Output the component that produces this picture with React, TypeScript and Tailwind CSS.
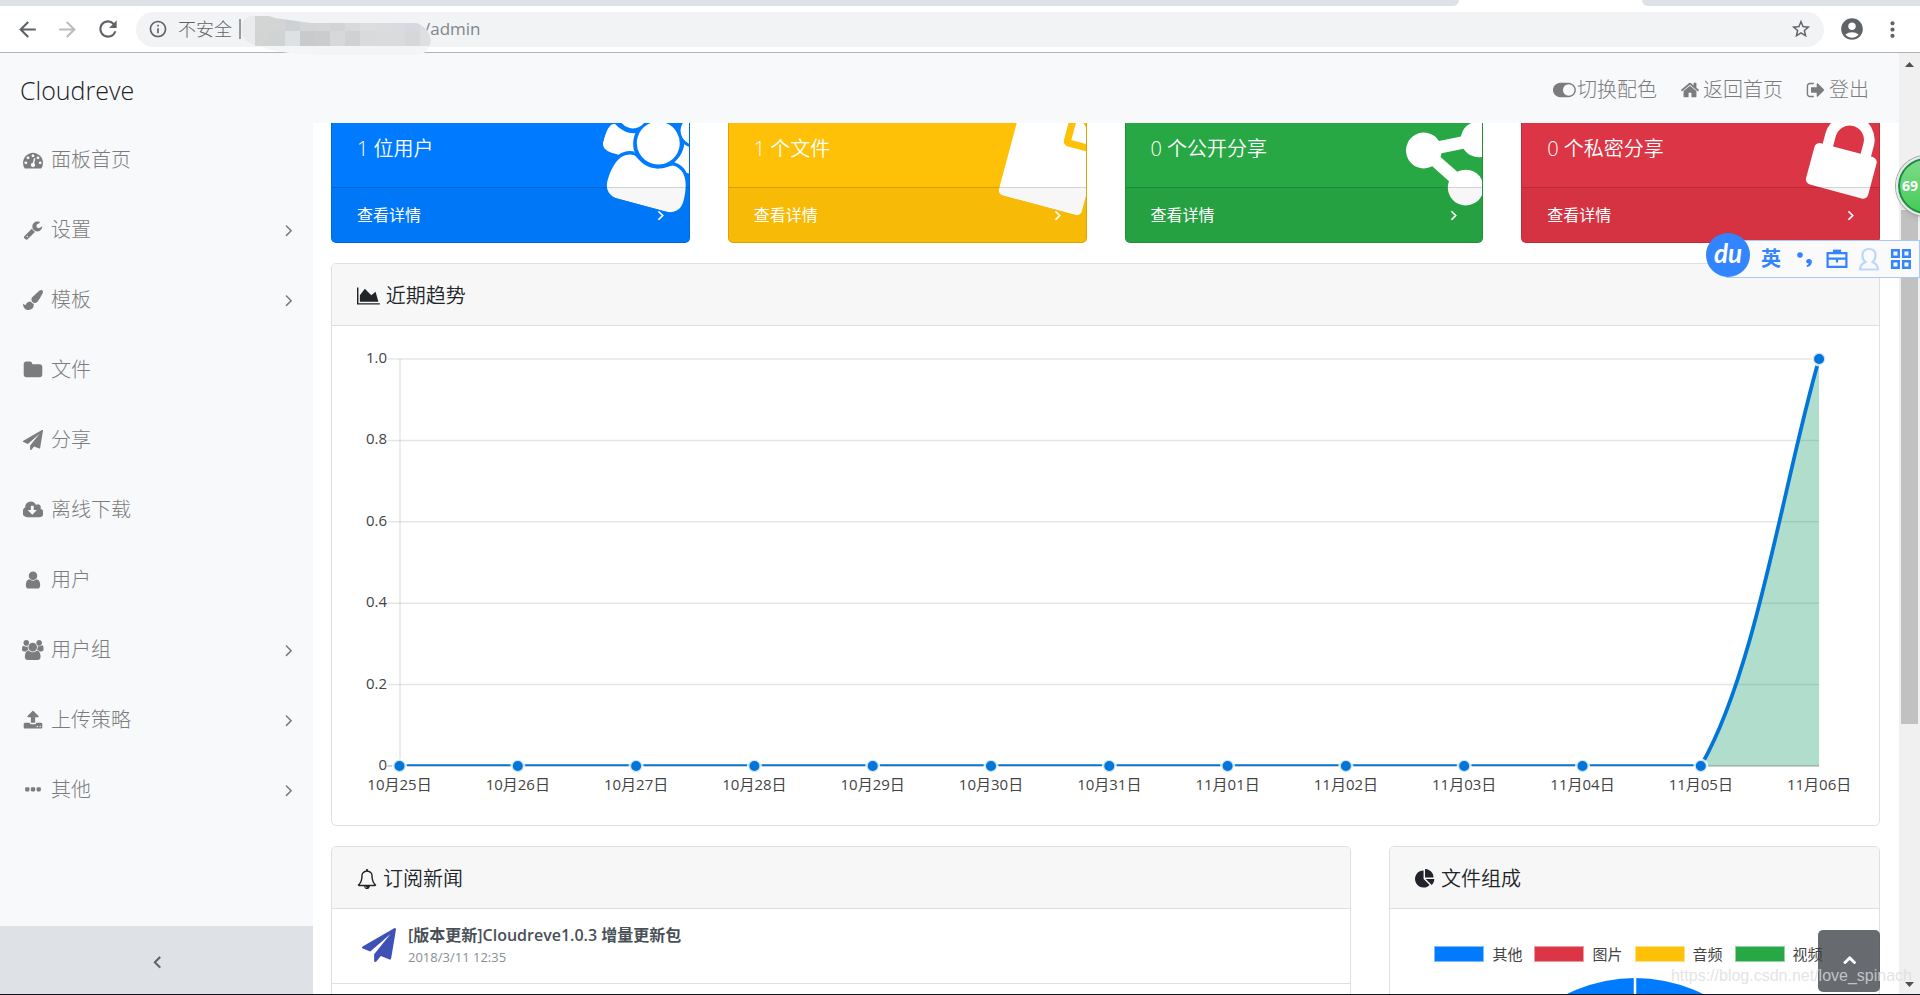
import type { ReactNode } from 'react';
import {
  MdAccountCircle,
  MdArrowBack,
  MdArrowForward,
  MdInfoOutline,
  MdMoreVert,
  MdRefresh,
  MdStarBorder,
} from 'react-icons/md';

// Font Awesome 4 glyphs on the 1792-unit em grid: [width, path]
const GLYPHS = {
  tachometer: [1792, 'M384 1152q0-53-37.5-90.5t-90.5-37.5-90.5 37.5-37.5 90.5 37.5 90.5 90.5 37.5 90.5-37.5 37.5-90.5zm192-448q0-53-37.5-90.5t-90.5-37.5-90.5 37.5-37.5 90.5 37.5 90.5 90.5 37.5 90.5-37.5 37.5-90.5zm428 481l101-382q6-26-7.5-48.5t-38.5-29.5-48 6.5-30 39.5l-101 382q-60 5-107 43.5t-63 98.5q-20 77 20 146t117 89 146-20 89-117q16-60-6-117t-72-91zm660-33q0-53-37.5-90.5t-90.5-37.5-90.5 37.5-37.5 90.5 37.5 90.5 90.5 37.5 90.5-37.5 37.5-90.5zm-640-640q0-53-37.5-90.5t-90.5-37.5-90.5 37.5-37.5 90.5 37.5 90.5 90.5 37.5 90.5-37.5 37.5-90.5zm448 192q0-53-37.5-90.5t-90.5-37.5-90.5 37.5-37.5 90.5 37.5 90.5 90.5 37.5 90.5-37.5 37.5-90.5zm320 448q0 261-141 483-19 29-54 29h-1402q-35 0-54-29-141-221-141-483 0-182 71-348t191-286 286-191 348-71 348 71 286 191 191 286 71 348z'],
  wrench: [1792, 'M448 1472q0-26-19-45t-45-19-45 19-19 45 19 45 45 19 45-19 19-45zm644-420l-682 682q-37 37-90 37-52 0-91-37l-106-108q-38-36-38-90 0-53 38-91l681-681q39 98 114.5 173.5t173.5 114.5zm634-435q0 39-23 106-47 134-164.5 217.5t-258.5 83.5q-185 0-316.5-131.5t-131.5-316.5 131.5-316.5 316.5-131.5q58 0 121.5 16.5t107.5 46.5q16 11 16 28t-16 28l-293 169v224l193 107q5-3 79-48.5t135.5-81 70.5-35.5q15 0 23.5 10t8.5 25z'],
  brush: [1792, 'M1615 0q70 0 122.5 46.5t52.5 116.5q0 63-45 151-332 629-465 752-97 91-218 91-126 0-216.5-92.5t-90.5-219.5q0-128 92-212l638-579q59-54 130-54zm-909 1034q39 76 106.5 130t150.5 76l1 71q4 213-129.5 347t-348.5 134q-123 0-218-46.5t-152.5-127.5-86.5-183-29-220q7 5 41 30t62 44.5 59 36.5 46 17q41 0 55-37 25-66 57.5-112.5t69.5-76 88-47.5 103-25.5 125-10.5z'],
  folder: [1792, 'M1728 608v704q0 92-66 158t-158 66h-1216q-92 0-158-66t-66-158v-960q0-92 66-158t158-66h320q92 0 158 66t66 158v32h672q92 0 158 66t66 158z'],
  plane: [1792, 'M1764 11q33 24 27 64l-256 1536q-5 29-32 45-14 8-31 8-11 0-24-5l-453-185-242 295q-18 23-49 23-13 0-22-4-19-7-30.5-23.5t-11.5-36.5v-349l864-1059-1069 925-395-162q-37-14-40-55-2-40 32-59l1664-960q15-9 32-9 20 0 36 11z'],
  cloud: [1856, 'M1216 928q0-14-9-23t-23-9h-224v-352q0-13-9.5-22.5t-22.5-9.5h-192q-13 0-22.5 9.5t-9.5 22.5v352h-224q-13 0-22.5 9.5t-9.5 22.5q0 14 9 23l352 352q9 9 23 9t23-9l351-351q10-12 10-24zm640 224q0 159-112.5 271.5t-271.5 112.5h-1088q-185 0-316.5-131.5t-131.5-316.5q0-130 70-240t188-165q-2-30-2-43 0-212 150-362t362-150q156 0 285.5 87t188.5 231q71-62 166-62 106 0 181 75t75 181q0 76-41 138 130 31 213.5 135.5t83.5 238.5z'],
  user: [1792, 'M1536 1399q0 109-62.5 187t-150.5 78h-854q-88 0-150.5-78t-62.5-187q0-85 8.5-160.5t31.5-152 58.5-131 94-89 134.5-34.5q131 128 313 128t313-128q76 0 134.5 34.5t94 89 58.5 131 31.5 152 8.5 160.5zm-256-887q0 159-112.5 271.5t-271.5 112.5-271.5-112.5-112.5-271.5 112.5-271.5 271.5-112.5 271.5 112.5 112.5 271.5z'],
  users: [1920, 'M593 896q-162 5-265 128h-134q-82 0-138-40.5t-56-118.5q0-353 124-353 6 0 43.5 21t97.5 42.5 119 21.5q67 0 133-23-5 37-5 66 0 159 93 292zm1071 637q0 120-73 189.5t-194 69.5h-874q-121 0-194-69.5t-73-189.5q0-53 3.5-103.5t14-109 26.5-108.5 43-97.5 62-81 85.5-53.5 111.5-20q10 0 43 21.5t73 48 107 48 135 21.5 135-21.5 107-48 73-48 43-21.5q61 0 111.5 20t85.5 53.5 62 81 43 97.5 26.5 108.5 14 109 3.5 103.5zm-1024-1277q0 106-75 181t-181 75-181-75-75-181 75-181 181-75 181 75 75 181zm704 384q0 159-112.5 271.5t-271.5 112.5-271.5-112.5-112.5-271.5 112.5-271.5 271.5-112.5 271.5 112.5 112.5 271.5zm576 225q0 78-56 118.5t-138 40.5h-134q-103-123-265-128 93-133 93-292 0-29-5-66 66 23 133 23 59 0 119-21.5t97.5-42.5 43.5-21q124 0 124 353zm-128-609q0 106-75 181t-181 75-181-75-75-181 75-181 181-75 181 75 75 181z'],
  upload: [1792, 'M1344 1472q0-26-19-45t-45-19-45 19-19 45 19 45 45 19 45-19 19-45zm256 0q0-26-19-45t-45-19-45 19-19 45 19 45 45 19 45-19 19-45zm128-224v320q0 40-28 68t-68 28h-1472q-40 0-68-28t-28-68v-320q0-40 28-68t68-28h427q21 56 70.5 92t110.5 36h256q61 0 110.5-36t70.5-92h427q40 0 68 28t28 68zm-325-648q-17 40-59 40h-256v448q0 26-19 45t-45 19h-256q-26 0-45-19t-19-45v-448h-256q-42 0-59-40-17-39 14-69l448-448q18-19 45-19t45 19l448 448q31 30 14 69z'],
  ellipsis: [1792, 'M576 736v192q0 40-28 68t-68 28h-192q-40 0-68-28t-28-68v-192q0-40 28-68t68-28h192q40 0 68 28t28 68zm512 0v192q0 40-28 68t-68 28h-192q-40 0-68-28t-28-68v-192q0-40 28-68t68-28h192q40 0 68 28t28 68zm512 0v192q0 40-28 68t-68 28h-192q-40 0-68-28t-28-68v-192q0-40 28-68t68-28h192q40 0 68 28t28 68z'],
  angle: [1792, 'M1171 960q0 13-10 23l-466 466q-10 10-23 10t-23-10l-50-50q-10-10-10-23t10-23l393-393-393-393q-10-10-10-23t10-23l50-50q10-10 23-10t23 10l466 466q10 10 10 23z'],
  toggle: [2048, 'M0 896q0-130 51-248.5t136.5-204 204-136.5 248.5-51h768q130 0 248.5 51t204 136.5 136.5 204 51 248.5-51 248.5-136.5 204-204 136.5-248.5 51h-768q-130 0-248.5-51t-204-136.5-136.5-204-51-248.5zm1408 512q104 0 198.5-40.5t163.5-109.5 109.5-163.5 40.5-198.5-40.5-198.5-109.5-163.5-163.5-109.5-198.5-40.5-198.5 40.5-163.5 109.5-109.5 163.5-40.5 198.5 40.5 198.5 109.5 163.5 163.5 109.5 198.5 40.5z'],
  home: [1792, 'M1472 992v480q0 26-19 45t-45 19h-384v-384h-256v384h-384q-26 0-45-19t-19-45v-480q0-1 .5-3t.5-3l575-474 575 474q1 2 1 6zm223-69l-62 74q-8 9-21 11h-3q-13 0-21-7l-692-577-692 577q-12 8-24 7-13-2-21-11l-62-74q-8-10-7-23.5t11-21.5l719-599q32-26 76-26t76 26l244 204v-195q0-14 9-23t23-9h192q14 0 23 9t9 23v408l219 182q10 8 11 21.5t-7 23.5z'],
  signOut: [1792, 'M704 1440q0 4 1 20t.5 26.5-3 23.5-10 19.5-20.5 6.5h-320q-119 0-203.5-84.5t-84.5-203.5v-704q0-119 84.5-203.5t203.5-84.5h320q13 0 22.5 9.5t9.5 22.5q0 4 1 20t.5 26.5-3 23.5-10 19.5-20.5 6.5h-320q-66 0-113 47t-47 113v704q0 66 47 113t113 47h312l11.5 1 11.5 3 8 5.5 7 9 2 13.5zm928-544q0 26-19 45l-544 544q-19 19-45 19t-45-19-19-45v-288h-448q-26 0-45-19t-19-45v-384q0-26 19-45t45-19h448v-288q0-26 19-45t45-19 45 19l544 544q19 19 19 45z'],
  areaChart: [2048, 'M2048 1536v128h-2048v-1536h128v1408h1920zm-384-1024l256 896h-1664v-576l448-576 576 576z'],
  pieChart: [1792, 'M768 890l546 546q-106 108-247.5 168t-298.5 60q-209 0-385.5-103t-279.5-279.5-103-385.5 103-385.5 279.5-279.5 385.5-103v762zm187 6h773q0 157-60 298.5t-168 247.5zm709-128h-768v-768q209 0 385.5 103t279.5 279.5 103 385.5z'],
  bell: [1792, 'M912 1696q0-16-16-16-59 0-101.5-42.5t-42.5-101.5q0-16-16-16t-16 16q0 73 51.5 124.5t124.5 51.5q16 0 16-16zm-666-288h1300q-266-300-266-832 0-51-24-105t-69-103-121.5-80.5-169.5-31.5-169.5 31.5-121.5 80.5-69 103-24 105q0 532-266 832zm1482 0q0 52-38 90t-90 38h-448q0 106-75 181t-181 75-181-75-75-181h-448q-52 0-90-38t-38-90q50-42 91-88t85-119.5 74.5-158.5 50-206 19.5-260q0-152 117-282.5t307-158.5q-8-19-8-39 0-40 28-68t68-28 68 28 28 68q0 20-8 39 190 28 307 158.5t117 282.5q0 139 19.5 260t50 206 74.5 158.5 85 119.5 91 88z'],
  file: [1792, 'M1152 512v-472q22 14 36 28l408 408q14 14 28 36h-472zm-128 32q0 40 28 68t68 28h544v1056q0 40-28 68t-68 28h-1344q-40 0-68-28t-28-68v-1600q0-40 28-68t68-28h800v544z'],
  share: [1792, 'M1344 1024q133 0 226.5 93.5t93.5 226.5-93.5 226.5-226.5 93.5-226.5-93.5-93.5-226.5q0-12 2-34l-360-180q-92 86-218 86-133 0-226.5-93.5t-93.5-226.5 93.5-226.5 226.5-93.5q126 0 218 86l360-180q-2-22-2-34 0-133 93.5-226.5t226.5-93.5 226.5 93.5 93.5 226.5-93.5 226.5-226.5 93.5q-126 0-218-86l-360 180q2 22 2 34t-2 34l360 180q92-86 218-86z'],
  lock: [1792, 'M640 768h512v-192q0-106-75-181t-181-75-181 75-75 181v192zm832 96v576q0 40-28 68t-68 28h-960q-40 0-68-28t-28-68v-576q0-40 28-68t68-28h32v-192q0-184 132-316t316-132 316 132 132 316v192h32q40 0 68 28t28 68z'],
} as const;

type GlyphName = keyof typeof GLYPHS;

function Fa({ name, className = 'h-5' }: { name: GlyphName; className?: string }) {
  const [w, d] = GLYPHS[name];
  return (
    <svg viewBox={`0 0 ${w} 1792`} className={`w-auto shrink-0 ${className}`} fill="currentColor" aria-hidden="true">
      <path d={d} />
    </svg>
  );
}

const MENU: { icon: GlyphName; label: string; sub?: boolean }[] = [
  { icon: 'tachometer', label: '面板首页' },
  { icon: 'wrench', label: '设置', sub: true },
  { icon: 'brush', label: '模板', sub: true },
  { icon: 'folder', label: '文件' },
  { icon: 'plane', label: '分享' },
  { icon: 'cloud', label: '离线下载' },
  { icon: 'user', label: '用户' },
  { icon: 'users', label: '用户组', sub: true },
  { icon: 'upload', label: '上传策略', sub: true },
  { icon: 'ellipsis', label: '其他', sub: true },
];

const STATS: { icon: GlyphName; text: string; bg: string }[] = [
  { icon: 'users', text: '1 位用户', bg: 'bg-[#007bff]' },
  { icon: 'file', text: '1 个文件', bg: 'bg-[#ffc107]' },
  { icon: 'share', text: '0 个公开分享', bg: 'bg-[#28a745]' },
  { icon: 'lock', text: '0 个私密分享', bg: 'bg-[#dc3545]' },
];

const DAYS = [
  '10月25日', '10月26日', '10月27日', '10月28日', '10月29日', '10月30日', '10月31日',
  '11月01日', '11月02日', '11月03日', '11月04日', '11月05日', '11月06日',
];
const COUNTS = [0, 0, 0, 0, 0, 0, 0, 0, 0, 0, 0, 0, 1];
const TICKS = ['1.0', '0.8', '0.6', '0.4', '0.2', '0'];

const LEGEND = [
  { label: '其他', color: 'bg-[#007bff]' },
  { label: '图片', color: 'bg-[#dc3545]' },
  { label: '音频', color: 'bg-[#ffc107]' },
  { label: '视频', color: 'bg-[#28a745]' },
];

// Blocks of the address mask, two rows of 15px tiles
const MASK_ROWS = [
  ['#d3d4d4', '#d3d5d5', '#cdd1d5', '#d4d5d6', '#d5d6d6', '#d2d4d3', '#d8d9da', '#dcdddf', '#dbdcde', '#dadbdf', '#d7d8e0', '#dcdde2'],
  ['#d2d3d3', '#cfd3d4', '#dde1e3', '#c9cacc', '#cbccce', '#d8d8d8', '#cfd1d3', '#d9dadb', '#dadbdc', '#d9dbdc', '#d6d7d8', '#dddfe1'],
];

function BrowserBar() {
  return (
    <div className="shrink-0 border-b border-[#b5b2b5] bg-white">
      <div className="flex h-[6px]">
        <div className="flex-[1459] rounded-br-md bg-[#dee1e6]" />
        <div className="flex-[183]" />
        <div className="flex-[278] rounded-bl-md bg-[#dee1e6]" />
      </div>
      <div className="flex h-[46px] items-center gap-[15px] px-[15px] text-[#5f6368]">
        <button aria-label="后退"><MdArrowBack size={25} /></button>
        <button aria-label="前进" className="text-[#babcbe]"><MdArrowForward size={25} /></button>
        <button aria-label="刷新"><MdRefresh size={26} /></button>
        <div className="flex h-[35px] flex-1 items-center rounded-full bg-[#f1f3f4] px-3">
          <MdInfoOutline size={20} className="shrink-0" />
          <span className="ml-[10px] text-lg font-light">不安全</span>
          <span className="ml-[7px] h-5 w-[2px] bg-[#97999c]" />
          <div className="relative h-full w-[183px] shrink-0">
            <svg viewBox="0 0 190 44" className="absolute top-0 left-0 z-10 h-[44px] w-[190px]" aria-hidden="true">
              <defs>
                <clipPath id="mask-shape">
                  <path d="M0 18Q0 4 16 3Q28 3 34 6L70 11H176Q188 16 190 28Q188 42 176 43H80Q40 42 20 35Q2 32 0 18Z" />
                </clipPath>
              </defs>
              <g clipPath="url(#mask-shape)">
                <rect width="190" height="44" fill="#f4f5f7" />
                <rect width="14" height="44" fill="#e9ebec" />
                {MASK_ROWS.map((row, r) =>
                  row.map((fill, i) => (
                    <rect key={`${r}-${i}`} x={14 + i * 15} y={4 + r * 15} width="15" height="15" fill={fill} />
                  ))
                )}
              </g>
            </svg>
          </div>
          <input aria-label="地址" defaultValue="/admin" className="min-w-0 flex-1 bg-transparent text-[17px] leading-6 text-[#80868b] outline-none" />
          <button aria-label="收藏"><MdStarBorder size={22} /></button>
        </div>
        <button aria-label="账户"><MdAccountCircle size={26} /></button>
        <button aria-label="菜单"><MdMoreVert size={25} /></button>
      </div>
    </div>
  );
}

function TopNav() {
  return (
    <header className="flex h-[70px] shrink-0 items-center bg-[#f8f9fb] pt-[3px] pr-[30px] pl-5">
      <a href="#" className="text-[25px] leading-8 font-[350] text-[#222]">Cloudreve</a>
      <nav className="ml-auto flex gap-[23px] text-xl font-light text-[#7c7c7d]">
        <a href="#" className="flex items-center gap-px"><Fa name="toggle" />切换配色</a>
        <a href="#" className="flex items-center gap-[3px]"><Fa name="home" />返回首页</a>
        <a href="#" className="flex items-center gap-[3px]"><Fa name="signOut" />登出</a>
      </nav>
    </header>
  );
}

function Sidebar() {
  return (
    <aside className="flex w-[313px] shrink-0 flex-col bg-[#f8f9fb]">
      <ul className="flex-1 pt-[2px]">
        {MENU.map((m) => (
          <li key={m.label}>
            <a href="#" className="flex h-[70px] items-center gap-[5px] pr-[14px] pl-5 text-xl font-light text-[#7c7c7d]">
              <span className="flex w-[26px] justify-center"><Fa name={m.icon} /></span>
              {m.label}
              {m.sub && <span className="ml-auto"><Fa name="angle" /></span>}
            </a>
          </li>
        ))}
      </ul>
      <button aria-label="收起菜单" className="flex h-[68px] shrink-0 items-center justify-center bg-[#dee2e6] pt-[6px] text-[#5a5e62]">
        <Fa name="angle" className="h-5 rotate-180 stroke-current stroke-[60]" />
      </button>
    </aside>
  );
}

function StatCard({ icon, text, bg }: { icon: GlyphName; text: string; bg: string }) {
  return (
    <div className={`relative overflow-hidden rounded-[5px] border border-black/15 bg-clip-border text-white ${bg}`}>
      <div className="absolute top-0 -right-[30px] flex w-[128px] rotate-[15deg] justify-center">
        <Fa name={icon} className="h-[100px]" />
      </div>
      <div className="relative px-[25px] pt-[27px] pb-[23px] text-xl leading-[30px] font-[350]">{text}</div>
      <a href="#" className="relative flex items-center justify-between border-t border-black/15 bg-black/3 py-[15px] pr-5 pl-[25px] text-base leading-6">
        查看详情
        <Fa name="angle" className="h-4 stroke-current stroke-[60]" />
      </a>
    </div>
  );
}

function Panel({ icon, title, className = '', children }: { icon: GlyphName; title: string; className?: string; children: ReactNode }) {
  return (
    <section className={`rounded-[5px] border border-[#dfdfdf] bg-white ${className}`}>
      <h2 className="flex h-[62px] items-center gap-[6px] rounded-t border-b border-[#dfdfdf] bg-[#f7f7f7] px-[25px] pt-[3px] text-xl font-[350] text-[#212529]">
        <Fa name={icon} />
        {title}
      </h2>
      {children}
    </section>
  );
}

const X0 = 42.5;
const STEP = 118.3;
const TOP = 8;
const BASE = 415;
const px = (i: number) => X0 + i * STEP;
const py = (v: number) => BASE - v * (BASE - TOP);

function TrendChart() {
  const curve = `M${px(0)} ${BASE}H${px(11)}C${px(11) + 55.5} ${BASE - 95.6} ${px(12) - 35.5} ${TOP + 122} ${px(12)} ${TOP}`;
  return (
    <svg viewBox="0 0 1497 449" className="block h-auto w-full overflow-visible" role="img" aria-label="近期趋势">
      <clipPath id="plot"><rect x="30" y="0" width="1440" height={BASE} /></clipPath>
      {TICKS.map((t, i) => {
        const y = TOP + (i * (BASE - TOP)) / 5;
        return (
          <g key={t}>
            <line x1={X0 - 12} x2={px(12)} y1={y} y2={y} stroke="#000" strokeOpacity={t === '0' ? 0.25 : 0.1} strokeWidth="1.5" />
            <text x="30" y={y + 4} textAnchor="end" fontSize="15" fill="#444">{t}</text>
          </g>
        );
      })}
      <line x1={X0 + 0.5} x2={X0 + 0.5} y1={TOP} y2={BASE} stroke="#000" strokeOpacity="0.1" strokeWidth="1.5" />
      <g clipPath="url(#plot)">
        <path d={`${curve}V${BASE}H${px(0)}Z`} fill="#02965a" fillOpacity="0.31" />
        <path d={curve} fill="none" stroke="#0275d8" strokeWidth="3.75" />
      </g>
      {DAYS.map((d, i) => (
        <g key={d}>
          <circle cx={px(i)} cy={py(COUNTS[i])} r="6.25" fill="#0275d8" stroke="#fff" strokeOpacity="0.8" strokeWidth="2.5" />
          <text x={px(i)} y="439" textAnchor="middle" fontSize="15" fill="#444">{d}</text>
        </g>
      ))}
    </svg>
  );
}

function Dashboard() {
  return (
    <main className="min-w-0 flex-1 overflow-hidden bg-white pr-[19px] pl-[18px]">
      {/* page is scrolled down a little, so the first row tucks under the nav */}
      <div className="-mt-[17px] grid grid-cols-4 gap-[38px]">
        {STATS.map((s) => <StatCard key={s.text} {...s} />)}
      </div>

      <Panel icon="areaChart" title="近期趋势" className="mt-5">
        <div className="p-[25px]"><TrendChart /></div>
      </Panel>

      <div className="mt-5 grid grid-cols-3 gap-[38px]">
        <Panel icon="bell" title="订阅新闻" className="col-span-2">
          <a href="#" className="flex items-center gap-3 border-b border-[#dfdfdf] px-[30px] pt-[14px] pb-4">
            <Fa name="plane" className="h-[34px] text-[#3f51b5]" />
            <div>
              <div className="text-base leading-6 font-semibold text-[#495057]">[版本更新]Cloudreve1.0.3 增量更新包</div>
              <div className="text-[13px] leading-5 text-[#868e96]">2018/3/11 12:35</div>
            </div>
          </a>
        </Panel>
        <Panel icon="pieChart" title="文件组成">
          <div className="flex flex-col items-center gap-4 p-[25px]">
            <ul className="mt-3 flex h-4 gap-3 pr-3 text-[15px] leading-4 text-[#444]">
              {LEGEND.map((l) => (
                <li key={l.label} className="flex items-center gap-2">
                  <span className={`h-4 w-[50px] border border-white/50 ${l.color}`} />
                  {l.label}
                </li>
              ))}
            </ul>
            <svg viewBox="0 0 304 304" className="w-[304px]" aria-hidden="true">
              <circle cx="152" cy="152" r="152" fill="#007bff" />
              <path d="M152 0V152" stroke="#fff" strokeWidth="2.5" />
            </svg>
          </div>
        </Panel>
      </div>
    </main>
  );
}

function ScrollTrack() {
  return (
    <div className="flex w-[21px] shrink-0 flex-col items-center bg-[#f0f0f0]">
      <svg viewBox="0 0 21 21" className="h-[21px] w-[21px]"><path d="M6 14L10.5 9L15 14Z" fill="#505050" /></svg>
      <div className="flex-[136]" />
      <div className="w-[17px] flex-[514] bg-[#c1c1c1]" />
      <div className="flex-[249]" />
      <svg viewBox="0 0 21 21" className="h-[21px] w-[21px]"><path d="M6 9L10.5 14L15 9Z" fill="#505050" /></svg>
    </div>
  );
}

// Floating input-method toolbar
function ImeBar() {
  return (
    <div className="absolute top-[240px] right-0 flex h-[38px] w-[194px] items-center border border-[#a9c9f7] bg-[#fafafa] text-[#3385ff]">
      <div className="absolute -left-[21px] flex h-[44px] w-[44px] -translate-y-1 items-center justify-center rounded-full bg-[#3385ff] pb-1 font-['Lato','Open_Sans',sans-serif] text-[26px] font-bold text-white italic">
        du
      </div>
      <span className="ml-[34px] text-xl leading-5 font-bold">英</span>
      <svg viewBox="0 0 138 36" className="h-[36px] w-[138px] shrink-0" aria-hidden="true">
        <g transform="translate(8 -1)">
          <circle cx="11" cy="15" r="2.8" fill="currentColor" />
          <path d="M17 21.500a2.900 2.900 0 1 1 5.800 1q-.8 4-4.800 4.500l-.5-1.500q2-.7 2.300-1.900q-2.500.1-2.800-2.100z" fill="currentColor" />
          <g fill="none" stroke="currentColor" strokeWidth="2.2">
            <path d="M38.600 13.100h18.800v13.800h-18.800zM38 18.600h20M48 18.600v4" />
            <path d="M45 10.700h6v2h-6z" />
          </g>
          <path
            d="M71 29.500h18q0-5-5.500-7.500Q87 19 86.500 14.500Q86 9 80 9T73.500 14.500Q73 19 76.500 22Q71 24.500 71 29.500Z"
            fill="none" stroke="#bcd7ff" strokeWidth="2.200"
          />
          <g fill="none" stroke="currentColor" strokeWidth="2.500">
            <path d="M103.200 10.200h6.500v6.500h-6.500zM114.200 10.200h6.500v6.500h-6.500zM103.200 21.200h6.500v6.500h-6.500zM114.200 21.200h6.500v6.500h-6.500z" />
          </g>
        </g>
      </svg>
    </div>
  );
}

export default function App() {
  return (
    <div className="relative flex h-screen flex-col overflow-hidden border-b border-[#14141c] bg-white font-['Open_Sans','Noto_Sans_CJK_SC',sans-serif]">
      <BrowserBar />
      <div className="flex min-h-0 flex-1">
        <div className="flex min-w-0 flex-1 flex-col">
          <TopNav />
          <div className="flex min-h-0 flex-1">
            <Sidebar />
            <Dashboard />
          </div>
        </div>
        <ScrollTrack />
      </div>

      <button aria-label="回到顶部" className="absolute right-10 bottom-[2px] flex h-[62px] w-[62px] items-center justify-center rounded-[5px] bg-[#343a40]/75 pb-[2px] text-white">
        <Fa name="angle" className="h-5 -rotate-90 stroke-current stroke-[120]" />
      </button>
      <div className="absolute top-[156px] -right-[36px] flex h-[60px] w-[60px] items-center rounded-full border-2 border-[#e8e8e8] bg-linear-to-b from-[#7fdc8c] to-[#3ecb52] pl-1 text-sm font-bold text-white shadow-md ring-1 ring-[#a5a5a5] inset-ring-2 inset-ring-[#1f8a48]">
        69
      </div>
      <ImeBar />
      <div className="pointer-events-none absolute right-2 bottom-[6px] font-['Liberation_Sans',sans-serif] text-base leading-6 text-[#dcdcdc]/80">
        https://blog.csdn.net/love_spinach
      </div>
    </div>
  );
}
